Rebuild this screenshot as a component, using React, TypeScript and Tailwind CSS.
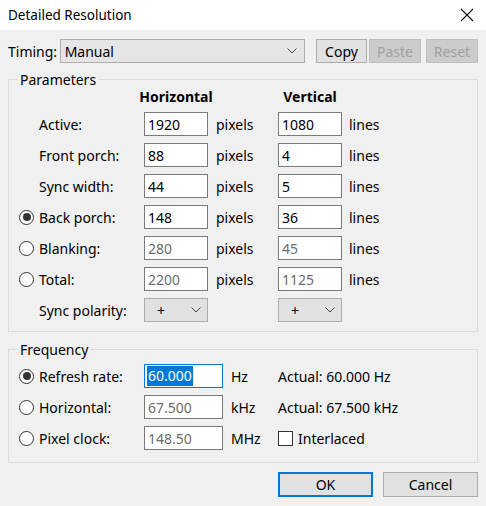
import React from 'react';

const font = { fontFamily: '"Noto Sans", "Open Sans", sans-serif' };

function Chevron() {
  return (
    <svg width="10" height="6" viewBox="0 0 10 6" fill="none" stroke="#444" strokeWidth="1">
      <path d="M0.5 0.5 L5 5 L9.5 0.5" />
    </svg>
  );
}

function Radio({ checked }: { checked?: boolean }) {
  return (
    <span className="flex items-center justify-center w-[15px] h-[15px] rounded-full border border-[#333] bg-white shrink-0">
      {checked && <span className="w-[8px] h-[8px] rounded-full bg-[#333]" />}
    </span>
  );
}

function Field({ value, disabled, w = 'w-[64px]' }: { value: string; disabled?: boolean; w?: string }) {
  return (
    <div
      className={`${w} h-[24px] border border-[#7a7a7a] bg-white flex items-center pl-[3px] ${
        disabled ? 'text-[#6d6d6d]' : 'text-black'
      }`}
    >
      {value}
    </div>
  );
}

function Btn({ label, w, disabled, def }: { label: string; w: string; disabled?: boolean; def?: boolean }) {
  return (
    <div
      className={`${w} flex items-center justify-center ${
        def
          ? 'border-2 border-[#0078d7] bg-[#e1e1e1] text-black'
          : disabled
          ? 'border border-[#bfbfbf] bg-[#cccccc] text-[#a0a0a0]'
          : 'border border-[#adadad] bg-[#e1e1e1] text-black'
      }`}
    >
      {label}
    </div>
  );
}

type Row = { radio?: 'on' | 'off'; label: string; h: string; v: string; disabled?: boolean };

const rows: Row[] = [
  { label: 'Active:', h: '1920', v: '1080' },
  { label: 'Front porch:', h: '88', v: '4' },
  { label: 'Sync width:', h: '44', v: '5' },
  { radio: 'on', label: 'Back porch:', h: '148', v: '36' },
  { radio: 'off', label: 'Blanking:', h: '280', v: '45', disabled: true },
  { radio: 'off', label: 'Total:', h: '2200', v: '1125', disabled: true },
];

function Group({ title, className, children }: { title: string; className: string; children: React.ReactNode }) {
  return (
    <div className={`relative border border-[#dcdcdc] ${className}`}>
      <span className="absolute left-[8px] top-[-10px] px-[3px] bg-[#f0f0f0] leading-[20px]">{title}</span>
      {children}
    </div>
  );
}

export default function App() {
  return (
    <div className="w-[486px] h-[506px] bg-[#f0f0f0] text-[14px] text-black flex flex-col" style={font}>
      {/* title bar */}
      <div className="h-[30px] bg-white flex items-center justify-between pl-[8px] pr-[12px] shrink-0">
        <span className="text-[13.5px]">Detailed Resolution</span>
        <svg width="14" height="14" viewBox="0 0 14 14" stroke="#111" strokeWidth="1.1">
          <path d="M1 1 L13 13 M13 1 L1 13" />
        </svg>
      </div>

      <div className="flex flex-col px-[8px] pt-[9px]">
        {/* timing */}
        <div className="flex items-center h-[24px]">
          <span className="w-[52px]">Timing:</span>
          <div className="w-[247px] h-[24px] border border-[#adadad] bg-[#e5e5e5] flex items-center justify-between pl-[4px] pr-[7px]">
            <span>Manual</span>
            <Chevron />
          </div>
          <div className="flex h-[24px] ml-[11px] gap-[2px]">
            <Btn label="Copy" w="w-[51px]" />
            <Btn label="Paste" w="w-[52px]" disabled />
            <div className="w-[1px]" />
            <Btn label="Reset" w="w-[52px]" disabled />
          </div>
        </div>

        {/* parameters */}
        <Group title="Parameters" className="mt-[16px] h-[253px] pt-[8px] pl-[10px]">
          <div className="flex h-[18px] mb-[6px] font-bold leading-[18px]">
            <div className="w-[125px]" />
            <div className="w-[64px] flex justify-center whitespace-nowrap">Horizontal</div>
            <div className="w-[70px]" />
            <div className="w-[64px] flex justify-center whitespace-nowrap">Vertical</div>
          </div>
          <div className="flex flex-col gap-[7px]">
            {rows.map((r) => (
              <div key={r.label} className="flex items-center h-[24px]">
                {r.radio ? <Radio checked={r.radio === 'on'} /> : <span className="w-[15px]" />}
                <span className="w-[110px] pl-[5px]">{r.label}</span>
                <Field value={r.h} disabled={r.disabled} />
                <span className="w-[70px] pl-[8px]">pixels</span>
                <Field value={r.v} disabled={r.disabled} />
                <span className="pl-[7px]">lines</span>
              </div>
            ))}
            <div className="flex items-center h-[24px]">
              <span className="w-[15px]" />
              <span className="w-[110px] pl-[5px]">Sync polarity:</span>
              <div className="w-[64px] h-[24px] border border-[#adadad] bg-[#e1e1e1] flex items-center justify-between pl-[12px] pr-[6px]">
                <span>+</span>
                <Chevron />
              </div>
              <span className="w-[70px]" />
              <div className="w-[64px] h-[24px] border border-[#adadad] bg-[#e1e1e1] flex items-center justify-between pl-[12px] pr-[6px]">
                <span>+</span>
                <Chevron />
              </div>
            </div>
          </div>
        </Group>

        {/* frequency */}
        <Group title="Frequency" className="mt-[17px] h-[114px] pt-[14px] pl-[10px]">
          <div className="flex flex-col gap-[7px]">
            <div className="flex items-center h-[24px]">
              <Radio checked />
              <span className="w-[110px] pl-[5px]">Refresh rate:</span>
              <div className="w-[79px] h-[24px] border border-[#0078d7] bg-white flex items-center pl-[2px]">
                <span className="bg-[#0078d7] text-white leading-[20px] px-[1px]">60.000</span>
              </div>
              <span className="w-[55px] pl-[8px]">Hz</span>
              <span>Actual: 60.000 Hz</span>
            </div>
            <div className="flex items-center h-[24px]">
              <Radio />
              <span className="w-[110px] pl-[5px]">Horizontal:</span>
              <Field value="67.500" disabled w="w-[79px]" />
              <span className="w-[55px] pl-[8px]">kHz</span>
              <span>Actual: 67.500 kHz</span>
            </div>
            <div className="flex items-center h-[24px]">
              <Radio />
              <span className="w-[110px] pl-[5px]">Pixel clock:</span>
              <Field value="148.50" disabled w="w-[79px]" />
              <span className="w-[55px] pl-[8px]">MHz</span>
              <span className="w-[15px] h-[15px] border border-[#333] bg-white" />
              <span className="pl-[5px]">Interlaced</span>
            </div>
          </div>
        </Group>

        {/* buttons */}
        <div className="flex justify-end gap-[10px] mt-[9px] h-[25px]">
          <Btn label="OK" w="w-[95px]" def />
          <Btn label="Cancel" w="w-[95px]" />
        </div>
      </div>
    </div>
  );
}
